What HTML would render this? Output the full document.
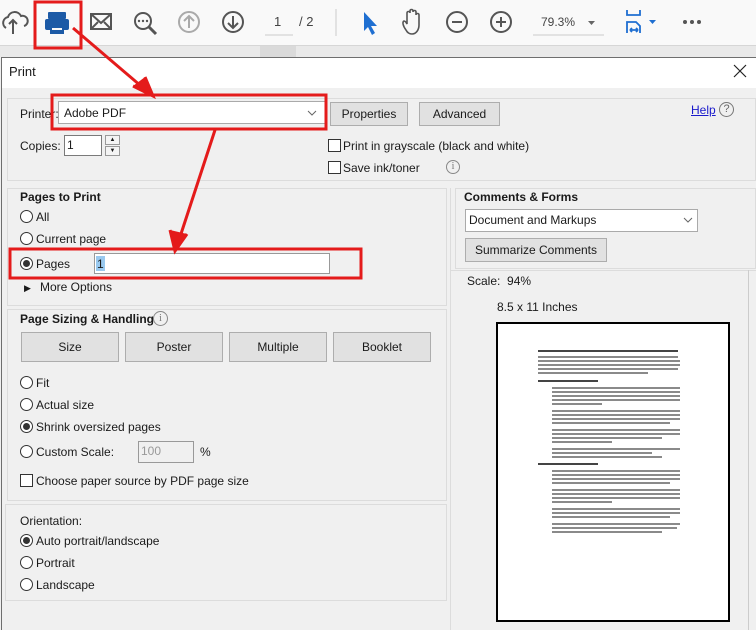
<!DOCTYPE html>
<html><head><meta charset="utf-8"><style>
*{margin:0;padding:0;box-sizing:border-box}
body{width:756px;height:630px;overflow:hidden;position:relative;background:#f0f0f0;font-family:"Liberation Sans",sans-serif;font-size:12px;color:#1a1a1a}
.a{position:absolute}
.t{position:absolute;white-space:nowrap;line-height:14px}
.grp{position:absolute;border:1px solid #dcdcdc}
.btn{position:absolute;background:#e1e1e1;border:1px solid #adadad;text-align:center;line-height:22px}
.rad{position:absolute;width:13px;height:13px;border:1px solid #333;border-radius:50%;background:#fff}
.rad.on::after{content:"";position:absolute;left:2px;top:2px;width:7px;height:7px;border-radius:50%;background:#333}
.chk{position:absolute;width:13px;height:13px;border:1px solid #333;background:#fff}
.inp{position:absolute;background:#fff;border:1px solid #7a7a7a}
.b{font-weight:bold}
</style></head><body>
<div class="a" style="left:0;top:0;width:756px;height:45px;background:#f9f9f9"></div>
<div class="a" style="left:0;top:45px;width:756px;height:12px;background:#e9e9e9;border-top:1px solid #d6d6d6"></div>
<div class="a" style="left:260px;top:46px;width:36px;height:11px;background:#dadada"></div>
<svg class="a" style="left:0;top:0" width="756" height="45" fill="none" stroke="#555" stroke-width="2">
<path d="M6 28 a6 6 0 0 1 2-11 a7 7 0 0 1 13-1 a5 5 0 0 1 3 10 M13 34 V20 M9 24 l4-4 4 4"/>
<g fill="#1c5aa6" stroke="none"><rect x="48" y="12" width="18" height="7" rx="1"/><rect x="45" y="19" width="24" height="11" rx="2"/><rect x="50" y="26" width="14" height="8" fill="#1c5aa6"/><rect x="52" y="28" width="10" height="2" fill="#f9f9f9"/></g>
<rect x="91" y="14" width="20" height="15"/><path d="M91 14 l10 9 10-9 M91 29 l7-7 M111 29 l-7-7"/>
<circle cx="143" cy="21" r="8"/><path d="M149 27 l7 7" stroke-width="3"/><g fill="#555" stroke="none"><circle cx="139" cy="21" r="1.2"/><circle cx="143" cy="21" r="1.2"/><circle cx="147" cy="21" r="1.2"/></g>
<g stroke="#aaa"><circle cx="189" cy="22" r="10"/><path d="M189 28 V16 M184 21 l5-5 5 5"/></g>
<circle cx="233" cy="22" r="10"/><path d="M233 16 V28 M228 23 l5 5 5-5"/>
<path d="M265 35 H293" stroke="#ccc" stroke-width="1"/>
<path d="M336 9 V36" stroke="#ccc" stroke-width="1"/>
<path d="M364 12 L364 31 L368 27 L372 35 L375 33 L371 26 L377 26 Z" fill="#1f6fd1" stroke="none"/>
<path d="M406 30 c-3-4-4-8-2-9 c1 0 2 1 3 3 V13 c0-2 3-2 3 0 V11 c0-2 3-2 3 0 V12 c0-2 3-2 3 0 V15 c0-2 3-2 3 0 V25 c0 5-3 9-7 9 c-3 0-5-2-6-4" stroke-width="1.6"/>
<circle cx="457" cy="22" r="10"/><path d="M452 22 H462"/>
<circle cx="501" cy="22" r="10"/><path d="M496 22 H506 M501 17 V27"/>
<path d="M533 35 H604" stroke="#ccc" stroke-width="1"/>
<path d="M588 21 h7 l-3.5 4z" fill="#666" stroke="none"/>
<g stroke="#1f6fd1"><path d="M627 10 V15 H640 V10 M627 33 V22 H636 L640 26 V33 M630 30 H638 M630 30 l2-2 M630 30 l2 2 M638 30 l-2-2 M638 30 l-2 2" stroke-width="1.8"/><path d="M649 20 h7 l-3.5 4z" fill="#1f6fd1" stroke="none"/></g>
<g fill="#555" stroke="none"><circle cx="685" cy="22" r="2"/><circle cx="692" cy="22" r="2"/><circle cx="699" cy="22" r="2"/></g>
</svg>
<div class="t" style="left:274px;top:15px;color:#444;font-size:13px">1</div>
<div class="t" style="left:299px;top:15px;color:#444;font-size:13px">/ 2</div>
<div class="t" style="left:541px;top:15px;color:#444">79.3%</div>

<div class="a" style="left:1px;top:57px;width:755px;height:573px;background:#f0f0f0;border-left:1px solid #6e6e6e;border-top:1px solid #6e6e6e"></div>
<div class="a" style="left:2px;top:58px;width:754px;height:30px;background:#fff"></div>
<div class="t" style="left:9px;top:65px;font-size:13px">Print</div>
<svg class="a" style="left:733px;top:64px" width="14" height="14" stroke="#222" stroke-width="1.2"><path d="M1 1 L13 13 M13 1 L1 13"/></svg>

<div class="grp" style="left:7px;top:98px;width:749px;height:83px"></div>
<div class="t" style="left:20px;top:107px">Printer:</div>
<div class="inp" style="left:58px;top:101px;width:268px;height:23px;border-color:#aaa"></div>
<div class="t" style="left:64px;top:106px">Adobe PDF</div>
<svg class="a" style="left:307px;top:110px" width="10" height="6" fill="none" stroke="#666"><path d="M1 1 l4 4 4-4"/></svg>
<div class="btn" style="left:330px;top:102px;width:78px;height:24px">Properties</div>
<div class="btn" style="left:419px;top:102px;width:81px;height:24px">Advanced</div>
<div class="t" style="left:691px;top:103px;color:#1a1acc;text-decoration:underline">Help</div>
<div class="a" style="left:719px;top:102px;width:15px;height:15px;border:1px solid #777;border-radius:50%;font-size:11px;text-align:center;line-height:13px;color:#666">?</div>
<div class="t" style="left:20px;top:139px">Copies:</div>
<div class="inp" style="left:64px;top:135px;width:38px;height:21px"></div>
<div class="t" style="left:67px;top:138px">1</div>
<div class="a" style="left:105px;top:135px;width:15px;height:10px;border:1px solid #999;background:#f4f4f4;font-size:6px;text-align:center;line-height:8px">▲</div>
<div class="a" style="left:105px;top:146px;width:15px;height:10px;border:1px solid #999;background:#f4f4f4;font-size:6px;text-align:center;line-height:8px">▼</div>
<div class="chk" style="left:328px;top:139px"></div>
<div class="t" style="left:343px;top:139px">Print in grayscale (black and white)</div>
<div class="chk" style="left:328px;top:161px"></div>
<div class="t" style="left:343px;top:161px">Save ink/toner</div>
<div class="a" style="left:446px;top:160px;width:14px;height:14px;border:1px solid #888;border-radius:50%;font-size:10px;text-align:center;line-height:12px;color:#777;font-family:'Liberation Serif',serif">i</div>

<div class="grp" style="left:7px;top:188px;width:440px;height:118px"></div>
<div class="t b" style="left:20px;top:190px">Pages to Print</div>
<div class="rad" style="left:20px;top:210px"></div><div class="t" style="left:36px;top:210px">All</div>
<div class="rad" style="left:20px;top:232px"></div><div class="t" style="left:36px;top:232px">Current page</div>
<div class="rad on" style="left:20px;top:257px"></div><div class="t" style="left:36px;top:257px">Pages</div>
<div class="inp" style="left:94px;top:253px;width:236px;height:21px;border-color:#999"></div>
<div class="a" style="left:96px;top:256px;width:9px;height:15px;background:#99c9ef"></div>
<div class="t" style="left:97px;top:257px">1</div>
<div class="t" style="left:24px;top:281px;font-size:9px">▶</div>
<div class="t" style="left:40px;top:280px">More Options</div>

<div class="grp" style="left:7px;top:309px;width:440px;height:192px"></div>
<div class="t b" style="left:20px;top:312px">Page Sizing &amp; Handling</div>
<div class="a" style="left:153px;top:311px;width:15px;height:15px;border:1px solid #888;border-radius:50%;font-size:10px;text-align:center;line-height:13px;color:#777;font-family:'Liberation Serif',serif">i</div>
<div class="btn" style="left:21px;top:332px;width:98px;height:30px;line-height:28px">Size</div>
<div class="btn" style="left:125px;top:332px;width:98px;height:30px;line-height:28px">Poster</div>
<div class="btn" style="left:229px;top:332px;width:98px;height:30px;line-height:28px">Multiple</div>
<div class="btn" style="left:333px;top:332px;width:98px;height:30px;line-height:28px">Booklet</div>
<div class="rad" style="left:20px;top:376px"></div><div class="t" style="left:36px;top:376px">Fit</div>
<div class="rad" style="left:20px;top:398px"></div><div class="t" style="left:36px;top:398px">Actual size</div>
<div class="rad on" style="left:20px;top:420px"></div><div class="t" style="left:36px;top:420px">Shrink oversized pages</div>
<div class="rad" style="left:20px;top:445px"></div><div class="t" style="left:36px;top:445px">Custom Scale:</div>
<div class="inp" style="left:138px;top:441px;width:56px;height:22px;background:#f0f0f0;border-color:#999"></div>
<div class="t" style="left:141px;top:444px;color:#999">100</div>
<div class="t" style="left:200px;top:445px">%</div>
<div class="chk" style="left:20px;top:474px"></div><div class="t" style="left:36px;top:474px">Choose paper source by PDF page size</div>

<div class="grp" style="left:5px;top:504px;width:442px;height:97px"></div>
<div class="t" style="left:20px;top:514px">Orientation:</div>
<div class="rad on" style="left:20px;top:534px"></div><div class="t" style="left:36px;top:534px">Auto portrait/landscape</div>
<div class="rad" style="left:20px;top:556px"></div><div class="t" style="left:36px;top:556px">Portrait</div>
<div class="rad" style="left:20px;top:578px"></div><div class="t" style="left:36px;top:578px">Landscape</div>

<div class="a" style="left:450px;top:188px;width:1px;height:442px;background:#dcdcdc"></div>
<div class="a" style="left:455px;top:188px;width:301px;height:81px;border:1px solid #dcdcdc"></div>
<div class="t b" style="left:464px;top:190px">Comments &amp; Forms</div>
<div class="inp" style="left:465px;top:209px;width:233px;height:23px;border-color:#aaa"></div>
<div class="t" style="left:469px;top:213px">Document and Markups</div>
<svg class="a" style="left:683px;top:217px" width="10" height="6" fill="none" stroke="#666"><path d="M1 1 l4 4 4-4"/></svg>
<div class="btn" style="left:465px;top:238px;width:142px;height:24px">Summarize Comments</div>
<div class="a" style="left:451px;top:270px;width:305px;height:1px;background:#dcdcdc"></div>
<div class="t" style="left:467px;top:274px">Scale:&nbsp; 94%</div>
<div class="t" style="left:497px;top:300px">8.5 x 11 Inches</div>
<div class="a" style="left:748px;top:270px;width:1px;height:360px;background:#ccc"></div>

<div class="a" style="left:496px;top:322px;width:234px;height:300px;background:#fff;border:2px solid #000"></div>
<div id="pv" class="a" style="left:538px;top:350px;width:150px;height:230px"></div>
<script>
var L=[[0,0,140,1],[0,6,140],[0,10,142],[0,14,142],[0,18,140],[0,22,110],[0,30,60,1],
[14,37,128],[14,41,128],[14,45,128],[14,49,128],[14,53,50],[14,60,128],[14,64,128],[14,68,128],[14,72,118],[14,79,128],[14,83,128],[14,87,110],[14,91,60],[14,98,128],[14,102,100],[14,106,110],[0,113,60,1],[14,120,128],[14,124,128],[14,128,128],[14,132,118],[14,139,128],[14,143,128],[14,147,128],[14,151,60],[14,158,128],[14,162,128],[14,166,118],[14,173,128],[14,177,125],[14,181,110]];
var h='';L.forEach(function(l){h+='<div class="a" style="left:'+l[0]+'px;top:'+l[1]+'px;width:'+l[2]+'px;height:2px;background:'+(l[3]?'#444':'#8a8a8a')+'"></div>'});
document.getElementById('pv').innerHTML=h;
</script>

<svg class="a" style="left:0;top:0" width="756" height="630" fill="none" stroke="#e41b1b" stroke-width="3">
<rect x="35" y="2" width="46" height="46"/>
<rect x="52" y="95" width="274" height="34"/>
<rect x="10" y="249" width="351" height="29"/>
<path d="M73 28 L148 92"/><path d="M133 86 L153 96 L145 77" fill="#e41b1b"/>
<path d="M215 130 L178 243"/><path d="M170 230 L175 251 L187 234" fill="#e41b1b"/>
</svg>
</body></html>
